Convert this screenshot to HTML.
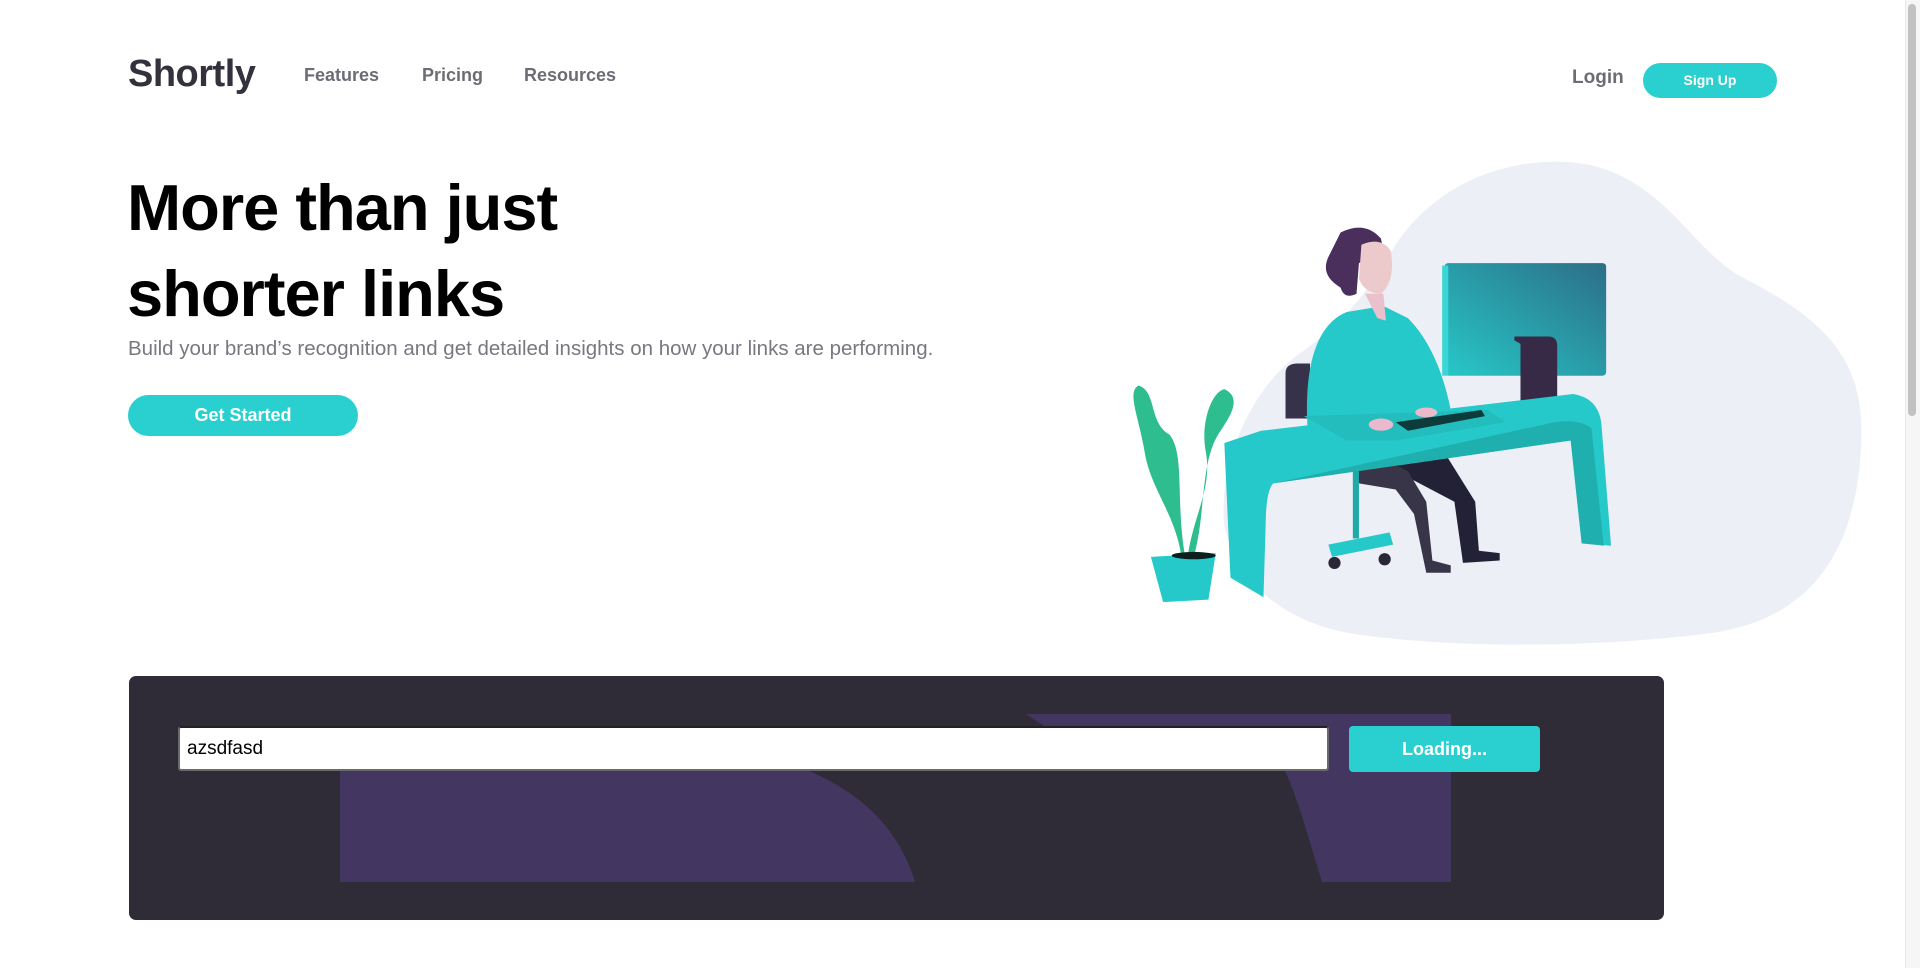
<!DOCTYPE html>
<html><head><meta charset="utf-8"><style>
html,body{margin:0;padding:0;background:#fff;width:1920px;height:968px;overflow:hidden;font-family:"Liberation Sans",sans-serif;}
.a{position:absolute;white-space:nowrap}
.nav{font-weight:bold;font-size:18px;color:#6e6b76;top:65px}
</style></head><body>
<div class="a" style="left:128px;top:53px;font-size:38px;font-weight:bold;color:#34313d;letter-spacing:-0.5px">Shortly</div>
<div class="a nav" style="left:304px">Features</div>
<div class="a nav" style="left:422px">Pricing</div>
<div class="a nav" style="left:524px">Resources</div>
<div class="a nav" style="left:1572px;top:67px;font-size:19px">Login</div>
<div class="a" style="left:1643px;top:63px;width:134px;height:35px;border-radius:18px;background:#2acfcf;color:#fff;font-weight:bold;font-size:14px;text-align:center;line-height:35px">Sign Up</div>
<div class="a" style="left:127px;top:165px;font-size:65px;font-weight:bold;color:#000;letter-spacing:-1px;line-height:86px">More than just<br>shorter links</div>
<div class="a" style="left:128px;top:337px;font-size:20.5px;color:#7a7780">Build your brand’s recognition and get detailed insights on how your links are performing.</div>
<div class="a" style="left:128px;top:395px;width:230px;height:41px;border-radius:21px;background:#2acfcf;color:#fff;font-weight:bold;font-size:18px;text-align:center;line-height:41px">Get Started</div>
<svg class="a" style="left:0;top:0" width="1920" height="968" viewBox="0 0 1568 791">
<defs><linearGradient id="mg" x1="0" y1="1" x2="1" y2="0"><stop offset="0" stop-color="#27c8c8"/><stop offset="1" stop-color="#2c6e88"/></linearGradient></defs>
<path d="M1140,200 C1180,140 1250,125 1300,135 C1360,150 1380,200 1420,225 C1500,265 1525,300 1520,370 C1515,450 1480,505 1400,517 C1300,530 1180,530 1100,517 C1040,505 1010,470 1000,430 C995,380 1020,320 1060,290 C1100,262 1120,235 1140,200Z" fill="#eceff6"/>
<rect x="1180" y="215" width="132" height="92" rx="3" fill="url(#mg)"/>
<rect x="1178" y="217" width="5" height="90" fill="#3ad6d6"/>
<path d="M1237,275 h28 q7,0 7,8 v55 h-30 l-5,-3 v-2 h5 v-52 l-5,-3z" fill="#362a47"/>
<path d="M1050,305 q0,-8 10,-8 h10 v45 h-20z" fill="#353249"/>
<path d="M1100,360 L1180,370 L1205,410 L1208,450 L1225,452 L1225,458 L1195,460 L1188,410 L1150,390 L1120,390z" fill="#232135"/>
<path d="M1100,360 L1150,385 L1165,410 L1170,458 L1185,462 L1185,468 L1165,468 L1155,420 L1140,400 L1110,395z" fill="#383549"/>
<path d="M1030,352 L1285,322 Q1305,325 1308,345 L1316,446 L1292,444 L1283,360 L1040,395 Q1035,400 1034,420 L1032,488 L1005,472 L1000,362z" fill="#26c9c9"/>
<path d="M1040,395 L1283,360 L1292,444 L1310,446 L1300,350 Q1290,342 1270,345z" fill="#1fa9a9" opacity=".8"/>
<rect x="1105" y="385" width="5" height="55" fill="#1fa9a9"/>
<path d="M1085,445 L1135,435 L1138,445 L1088,455z" fill="#26c9c9"/>
<circle cx="1090" cy="460" r="5" fill="#2a2838"/><circle cx="1131" cy="457" r="5" fill="#2a2838"/>
<path d="M1068,350 C1065,300 1075,265 1100,255 L1130,250 L1150,260 C1170,280 1180,310 1185,335 L1170,345 L1140,350 L1105,352z" fill="#26c9c9"/>
<path d="M1065,340 L1215,335 L1230,345 L1140,360 L1100,360z" fill="#24bdbd"/>
<path d="M1140,345 L1210,335 L1213,340 L1150,352z" fill="#0d3a3a"/>
<ellipse cx="1128" cy="347" rx="10" ry="5" fill="#eab9cc"/><ellipse cx="1165" cy="337" rx="9" ry="4" fill="#eab9cc"/>
<path d="M1115,240 L1125,260 L1132,262 L1130,240z" fill="#eac0cc"/>
<path d="M1095,190 Q1115,180 1128,195 L1130,205 L1110,215 L1108,240 Q1098,245 1095,235 Q1078,225 1085,210z" fill="#4a2e5c"/>
<path d="M1112,200 Q1128,193 1136,205 Q1140,230 1128,240 Q1115,240 1110,228z" fill="#eccacb"/>
<path d="M965,455 C960,420 940,400 935,370 C930,340 920,320 930,315 C945,320 938,345 955,355 C968,370 960,410 968,455z" fill="#2dbd8f"/>
<path d="M970,455 C975,420 990,400 985,370 C980,345 990,320 1000,318 C1015,325 1005,340 995,355 C980,380 985,420 975,455z" fill="#2dbd8f"/>
<path d="M940,455 L993,452 L987,490 L950,492z" fill="#26c9c9"/>
<ellipse cx="975" cy="454" rx="18" ry="3" fill="#0c1f1f"/>
</svg>
<div class="a" style="left:129px;top:676px;width:1535px;height:244px;background:#2f2c37;border-radius:7px;overflow:hidden">
<svg width="1535" height="244" style="position:absolute;left:0;top:0">
<path d="M211,95 H680 C750,125 775,170 786,206 H211Z" fill="#433660"/>
<path d="M897,38 H1322 V206 H1193 C1170,130 1160,90 1130,50 L915,50Z" fill="#433660"/>
</svg>
</div>
<div class="a" style="left:178px;top:726px;height:41px;background:#fff;border:2px solid #6a6a6a;border-top-color:#222;border-radius:3px;font-size:19px;line-height:41px;padding-left:7px;width:1140px">azsdfasd</div>
<div class="a" style="left:1349px;top:726px;width:191px;height:46px;background:#2acfcf;border-radius:4px;color:#fff;font-weight:bold;font-size:18px;text-align:center;line-height:46px">Loading...</div>
<div class="a" style="left:1905px;top:0;width:15px;height:968px;background:#f6f6f6;border-left:1px solid #e8e8e8"></div>
<div class="a" style="left:1908px;top:4px;width:8px;height:412px;background:#c2c2c2;border-radius:4px"></div>
</body></html>
